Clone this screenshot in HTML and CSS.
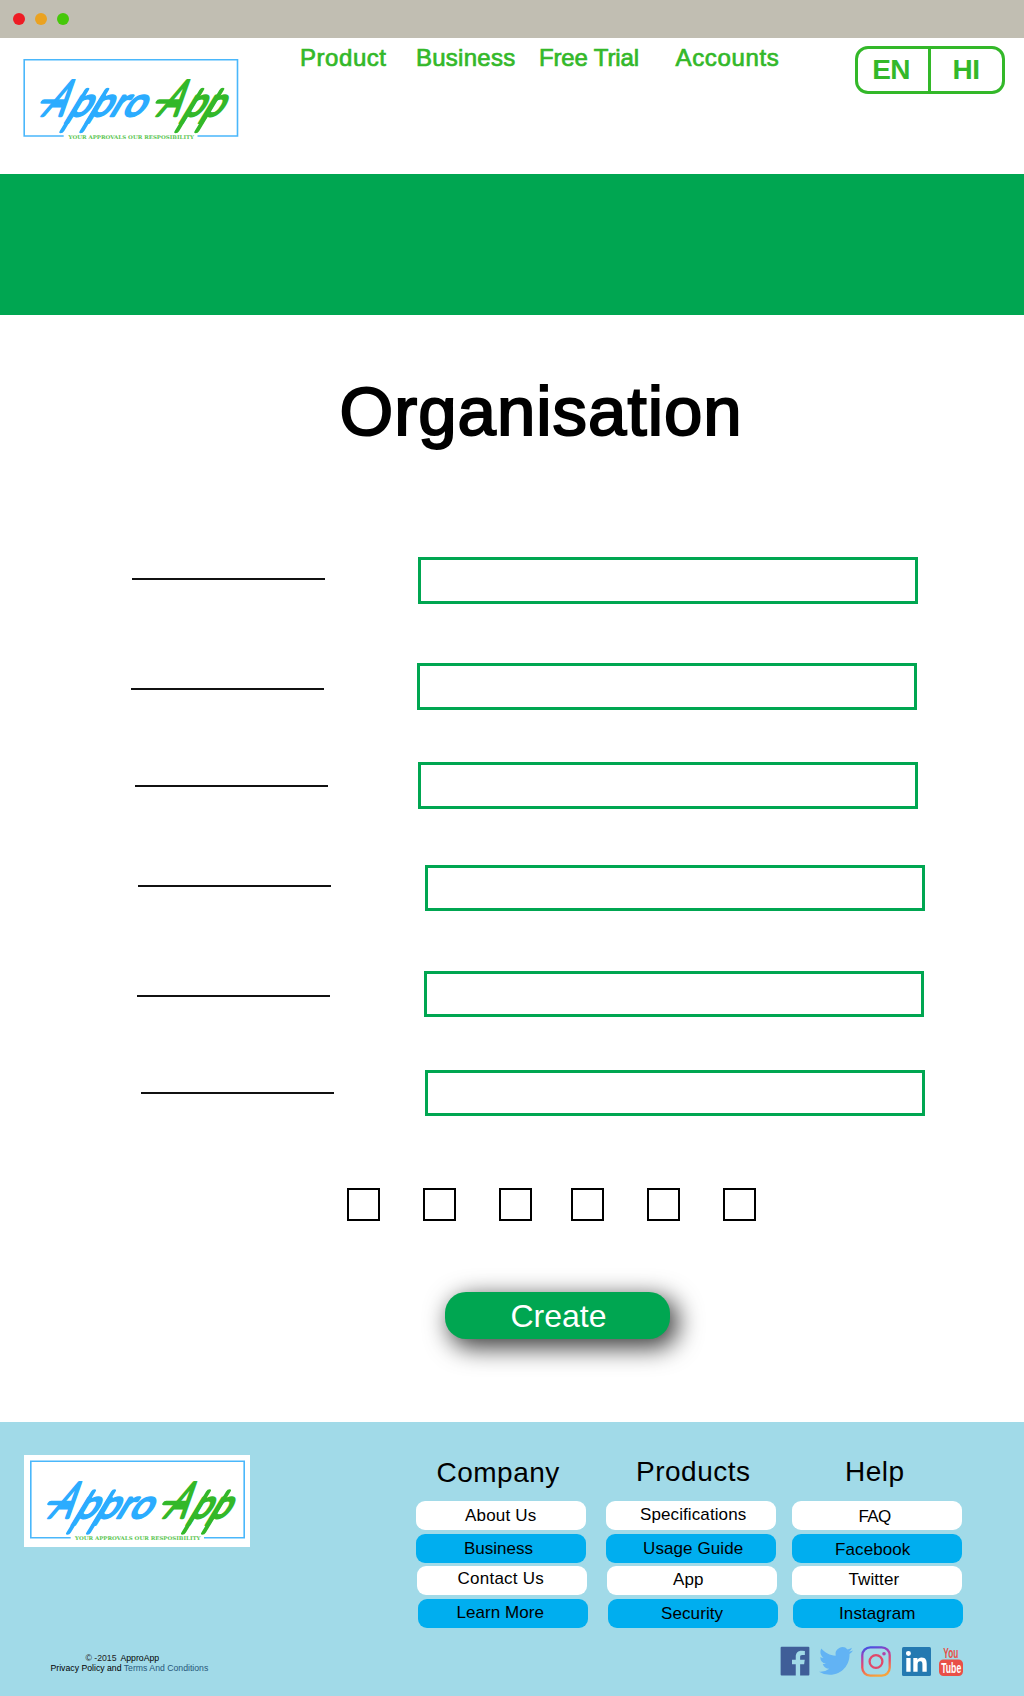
FILE: index.html
```html
<!DOCTYPE html>
<html lang="en">
<head>
<meta charset="utf-8">
<title>ApproApp – Organisation</title>
<link rel="stylesheet" href="styles.css">
</head>
<body>
<div class="window-bar"><i class="dot red"></i><i class="dot amber"></i><i class="dot lime"></i></div>

<header class="header">
  <svg class="logo" viewBox="0 0 226 92">
    <path class="logo-frame" d="M46.700 83H7.200V6.700H220.500V83H180.500"/>
    <g class="logo-blue" transform="translate(24 63) skewX(-31)">
      <text font-size="50" textLength="21" lengthAdjust="spacingAndGlyphs">A</text>
      <path d="M-6.500-14.500H14M30-26V15M50-26V15"/>
      <text x="25.500" font-size="40" textLength="75" lengthAdjust="spacingAndGlyphs">ppro</text>
    </g>
    <g class="logo-green" transform="translate(139 63) skewX(-31)">
      <text font-size="50" textLength="21" lengthAdjust="spacingAndGlyphs">A</text>
      <path d="M-6.500-14.500H14M30-26V15M50-26V15"/>
      <text x="25.500" font-size="40" textLength="38.500" lengthAdjust="spacingAndGlyphs">pp</text>
    </g>
    <text class="logo-tag" x="51.500" y="85.500" textLength="125.500" lengthAdjust="spacingAndGlyphs">YOUR APPROVALS OUR RESPOSIBILITY</text>
  </svg>
  <nav class="nav">
    <a class="nav-product">Product</a>
    <a class="nav-business">Business</a>
    <a class="nav-trial">Free Trial</a>
    <a class="nav-accounts">Accounts</a>
  </nav>
  <div class="lang"><span>EN</span><span>HI</span></div>
</header>

<div class="banner"></div>

<main class="main">
  <h1 class="title">Organisation</h1>
  <form class="form">
    <div class="row r1"><span class="line"></span><input class="field" type="text"></div>
    <div class="row r2"><span class="line"></span><input class="field" type="text"></div>
    <div class="row r3"><span class="line"></span><input class="field" type="text"></div>
    <div class="row r4"><span class="line"></span><input class="field" type="text"></div>
    <div class="row r5"><span class="line"></span><input class="field" type="text"></div>
    <div class="row r6"><span class="line"></span><input class="field" type="text"></div>
    <div class="checks">
      <i class="check"></i><i class="check"></i><i class="check"></i>
      <i class="check"></i><i class="check"></i><i class="check"></i>
    </div>
    <button class="create" type="button">Create</button>
  </form>
</main>

<footer class="footer">
  <div class="about">
    <svg class="footer-logo" viewBox="0 0 226 92">
      <path class="logo-frame" d="M46.700 82.700H6.800V6.200H220.200V82.700H180"/>
      <g class="logo-blue" transform="translate(23.700 62.500) skewX(-31)">
        <text font-size="50" textLength="21" lengthAdjust="spacingAndGlyphs">A</text>
        <path d="M-6.500-14.500H14M30-26V15M50-26V15"/>
        <text x="25.500" font-size="40" textLength="75" lengthAdjust="spacingAndGlyphs">ppro</text>
      </g>
      <g class="logo-green" transform="translate(138.700 62.500) skewX(-31)">
        <text font-size="50" textLength="21" lengthAdjust="spacingAndGlyphs">A</text>
        <path d="M-6.500-14.500H14M30-26V15M50-26V15"/>
        <text x="25.500" font-size="40" textLength="38.500" lengthAdjust="spacingAndGlyphs">pp</text>
      </g>
      <text class="logo-tag" x="51" y="85" textLength="125.500" lengthAdjust="spacingAndGlyphs">YOUR APPROVALS OUR RESPOSIBILITY</text>
    </svg>
    <p class="legal"><span class="copy">© -2015</span> <span class="brand">ApproApp</span></p>
    <p class="policy"><span>Privacy Policy and</span> <a>Terms And Conditions</a></p>
  </div>
  <div class="links">
    <div class="columns">
      <section class="col company">
        <h2>Company</h2>
        <a>About Us</a><a>Business</a><a>Contact Us</a><a>Learn More</a>
      </section>
      <section class="col products">
        <h2>Products</h2>
        <a>Specifications</a><a>Usage Guide</a><a>App</a><a>Security</a>
      </section>
      <section class="col help">
        <h2>Help</h2>
        <a>FAQ</a><a>Facebook</a><a>Twitter</a><a>Instagram</a>
      </section>
    </div>
    <div class="social">
      <svg width="30" height="30" viewBox="0 0 24 24"><path fill="#3f5e98" d="M1.300.5h21.400a.8.8 0 0 1 .8.800v21.400a.8.8 0 0 1-.8.800h-6.600v-9h3.200l.5-3.500h-3.700V8.800c0-1 .3-1.700 1.700-1.700h2.100V3.900a25 25 0 0 0-2.700-.1c-2.700 0-4.600 1.700-4.600 4.700V11h-3v3.500h3v9H1.300a.8.8 0 0 1-.8-.8V1.300a.8.8 0 0 1 .8-.8z"/></svg>
      <svg class="twitter" width="34" height="30" viewBox="0 1.500 24 21"><path fill="#62b3f4" d="M23.953 4.570a10 10 0 0 1-2.825.775 4.958 4.958 0 0 0 2.163-2.723c-.951.555-2.005.959-3.127 1.184a4.920 4.920 0 0 0-8.384 4.482C7.690 8.095 4.067 6.130 1.640 3.162a4.920 4.920 0 0 0-.666 2.475c0 1.710.870 3.213 2.188 4.096a4.904 4.904 0 0 1-2.228-.616v.060a4.923 4.923 0 0 0 3.946 4.827 4.996 4.996 0 0 1-2.212.085 4.936 4.936 0 0 0 4.604 3.417 9.867 9.867 0 0 1-6.102 2.105c-.390 0-.779-.023-1.170-.067a13.995 13.995 0 0 0 7.557 2.209c9.053 0 13.998-7.496 13.998-13.985 0-.210 0-.420-.015-.630A9.935 9.935 0 0 0 24 4.590z"/></svg>
      <svg class="instagram" width="30" height="31" viewBox="0 0 30 31">
        <defs><linearGradient id="ig" x1="0.300" y1="0" x2="0.550" y2="1"><stop offset="0" stop-color="#4d4fe0"/><stop offset=".25" stop-color="#a83fb5"/><stop offset=".6" stop-color="#ec4c62"/><stop offset="1" stop-color="#f7a33c"/></linearGradient></defs>
        <rect x="1.300" y="1.300" width="27.400" height="28.400" rx="8" fill="none" stroke="url(#ig)" stroke-width="2.300"/>
        <circle cx="15" cy="15.500" r="6.400" fill="none" stroke="#e0496a" stroke-width="2.300"/>
        <circle cx="23" cy="7.700" r="1.800" fill="#b044a8"/>
      </svg>
      <svg class="linkedin" width="29" height="29" viewBox="0 0 24 24"><rect width="24" height="24" rx="1.300" fill="#2479b1"/><path fill="#fff" d="M3.560 9h3.560v11.450H3.560zM5.340 3.300a2.060 2.060 0 1 1 0 4.130 2.060 2.060 0 0 1 0-4.130zM9.350 9h3.410v1.560h.05c.48-.9 1.640-1.850 3.370-1.850 3.600 0 4.270 2.370 4.270 5.460v6.280h-3.550v-5.570c0-1.330-.03-3.040-1.850-3.040-1.850 0-2.140 1.440-2.140 2.940v5.670H9.350z"/></svg>
      <svg class="youtube" width="24" height="31" viewBox="0 0 24 31">
        <rect x="0" y="13.500" width="24" height="16.500" rx="4.500" fill="#e94f47"/>
        <text x="4.300" y="11.900" font-size="14.500" fill="#e94f47" textLength="15" lengthAdjust="spacingAndGlyphs">You</text>
        <text x="2.200" y="27" font-size="14.500" fill="#fff" textLength="20" lengthAdjust="spacingAndGlyphs">Tube</text>
      </svg>
    </div>
  </div>
</footer>
</body>
</html>
```
FILE: styles.css
```css
* { box-sizing: border-box; }

body {
  margin: 0;
  width: 1024px;
  background: #fff;
  color: #000;
  font-family: "Liberation Sans", Arial, Helvetica, sans-serif;
}

svg { overflow: visible; }

/* window chrome */
.window-bar {
  display: flex;
  gap: 10px;
  height: 38px;
  padding: 12.500px 13px;
  background: #c1beb2;
}
.dot { width: 12px; height: 12px; border-radius: 50%; }
.red { background: #ee1c25; }
.amber { background: #eaa221; }
.lime { background: #46c80a; }

/* header */
.header {
  display: flex;
  align-items: flex-start;
  height: 136px;
}
.logo { flex: none; width: 226px; height: 92px; margin: 15px 0 0 17px; }
.nav {
  display: flex;
  flex: none;
  width: 612px;
  padding: 6px 0 0 57px;
  color: #33b829;
  font-size: 24px;
  line-height: 28px;
  white-space: nowrap;
  -webkit-text-stroke: 0.7px #33b829;
}
.nav-product { width: 116px; letter-spacing: 0.55px; }
.nav-business { width: 123px; letter-spacing: 0.25px; }
.nav-trial { width: 136.500px; letter-spacing: -0.15px; }
.nav-accounts { letter-spacing: 0.65px; }
.lang {
  display: flex;
  width: 150px;
  height: 48px;
  margin-top: 8px;
  border: 3px solid #33b829;
  border-radius: 13px;
  color: #33b829;
  font-size: 28px;
  font-weight: bold;
  line-height: 41px;
  text-align: center;
}
.lang span { width: 70px; padding-right: 4px; letter-spacing: -0.800px; }
.lang span + span { flex: 1; padding-right: 1px; border-left: 3px solid #33b829; letter-spacing: -0.500px; }

/* brush-script logo */
.logo-frame { fill: none; stroke: #4ab7fb; stroke-width: 1.600; }
.logo-blue, .logo-green {
  font-family: Lato, "Liberation Sans", sans-serif;
  stroke-width: 2.400;
  stroke-linejoin: round;
  stroke-linecap: round;
}
.logo-blue path, .logo-green path { fill: none; stroke-width: 4.500; }
.logo-blue { fill: #2bacff; stroke: #2bacff; }
.logo-green { fill: #33b829; stroke: #33b829; }
.logo-tag { font: bold 5px "DejaVu Serif", serif; fill: #5cc653; }

.banner { height: 141px; margin-top: -0.5px; background: #00a651; }

/* form */
.main { height: 1107.500px; padding-top: 57px; }
.title {
  margin: 0 0 105px 339.500px;
  font-size: 69px;
  font-weight: normal;
  line-height: 80px;
  letter-spacing: 1px;
  -webkit-text-stroke: 2px #000;
}
.form { display: flex; flex-direction: column; align-items: flex-start; }
.row { display: flex; height: 47px; }
.line { width: 193px; height: 2px; background: #111; }
.field {
  width: 500px;
  height: 47px;
  padding: 0 10px;
  border: 3px solid #00a651;
  background: #fff;
  font: inherit;
}
.r4 .field, .r5 .field, .r6 .field { height: 46px; }
.r1 { margin: 0 0 59px 132px; }
.r2 { margin: 0 0 52px 131px; }
.r3 { margin: 0 0 56px 135px; }
.r4 { margin: 0 0 59px 138px; }
.r5 { margin: 0 0 52px 137px; }
.r6 { margin: 0 0 71px 141px; }
.r1 .line { margin: 21px 93px 0 0; }
.r2 .line { margin: 25px 93px 0 0; }
.r3 .line { margin: 23px 90px 0 0; }
.r4 .line { margin: 20px 94px 0 0; }
.r5 .line { margin: 24px 94px 0 0; }
.r6 .line { margin: 22px 91px 0 0; }

.checks { display: flex; gap: 43px; margin-left: 347px; }
.check { width: 33px; height: 33px; border: 2px solid #000; }
.check:nth-child(4) { margin-left: -4px; }

.create {
  width: 225px;
  height: 47px;
  margin: 71px 0 0 445px;
  padding: 0 0 0 2px;
  border: 0;
  border-radius: 21px;
  background: #00a651;
  box-shadow: 6px 7px 24px 2px rgba(0, 0, 0, 0.75);
  color: #fff;
  font: 32px/49px "Liberation Sans", Arial, sans-serif;
}

/* footer */
.footer {
  display: flex;
  height: 274px;
  background: #a1dae8;
}
.about { width: 416px; padding: 33px 0 0 24px; }
.footer-logo { display: block; width: 226px; height: 92px; background: #fff; }
.legal, .policy { margin: 0; font-size: 8.7px; line-height: 10px; white-space: nowrap; }
.legal { margin: 106px 0 0 61.500px; }
.copy { margin-right: 2px; color: #222; }
.policy { margin-left: 26.500px; }
.policy a { color: #27587a; }

.links { padding-top: 35px; }
.columns { display: flex; }
.col { display: flex; flex-direction: column; width: 170px; }
.products { margin: 0 15px 0 20px; }
.col h2 {
  margin: 0 0 12px;
  font-size: 28px;
  font-weight: normal;
  line-height: 32px;
  letter-spacing: 0.500px;
}
.company h2 { padding-left: 20.500px; }
.products h2 { padding-left: 30px; }
.products h2, .help h2 { margin: -1px 0 13px; }
.help h2 { padding-left: 54px; }
.col a {
  width: 170px;
  height: 29px;
  margin-bottom: 4px;
  border-radius: 9px;
  background: #fff;
  font-size: 17px;
  line-height: 29px;
  white-space: nowrap;
  letter-spacing: 0.1px;
}
.col a:nth-of-type(even) { background: #00aeef; }
.col a:nth-of-type(2) { margin-bottom: 3px; }
.col a:nth-of-type(3) { margin-left: 1px; line-height: 28px; }
.col a:nth-of-type(4) { margin-left: 2px; margin-bottom: 0; }
.company a:nth-of-type(1) { padding-left: 49px; letter-spacing: 0.2px; }
.company a:nth-of-type(2) { padding-left: 48px; letter-spacing: 0; }
.company a:nth-of-type(3) { padding-left: 40.500px; line-height: 26px; letter-spacing: 0.25px; }
.company a:nth-of-type(4) { padding-left: 38.500px; line-height: 27px; letter-spacing: 0.05px; }
.products a:nth-of-type(1) { padding-left: 34px; line-height: 27px; }
.products a:nth-of-type(2) { padding-left: 37px; letter-spacing: 0.1px; }
.products a:nth-of-type(3) { padding-left: 66px; }
.products a:nth-of-type(4) { padding-left: 53px; line-height: 30px; }
.help a { margin-left: 0.500px; }
.help a:nth-of-type(1) { padding-left: 67px; line-height: 31px; letter-spacing: -0.6px; }
.help a:nth-of-type(2) { padding-left: 43.500px; line-height: 31px; }
.help a:nth-of-type(3) { padding-left: 56.500px; }
.help a:nth-of-type(4) { padding-left: 46px; line-height: 30px; }

.social { display: flex; align-items: flex-start; margin: 18px 0 0 364px; }
.twitter { margin-left: 9px; }
.instagram { margin-left: 8px; }
.linkedin { margin: 1px 0 0 11px; }
.youtube { margin-left: 8px; font-family: "Liberation Sans", sans-serif; font-weight: bold; }
```
